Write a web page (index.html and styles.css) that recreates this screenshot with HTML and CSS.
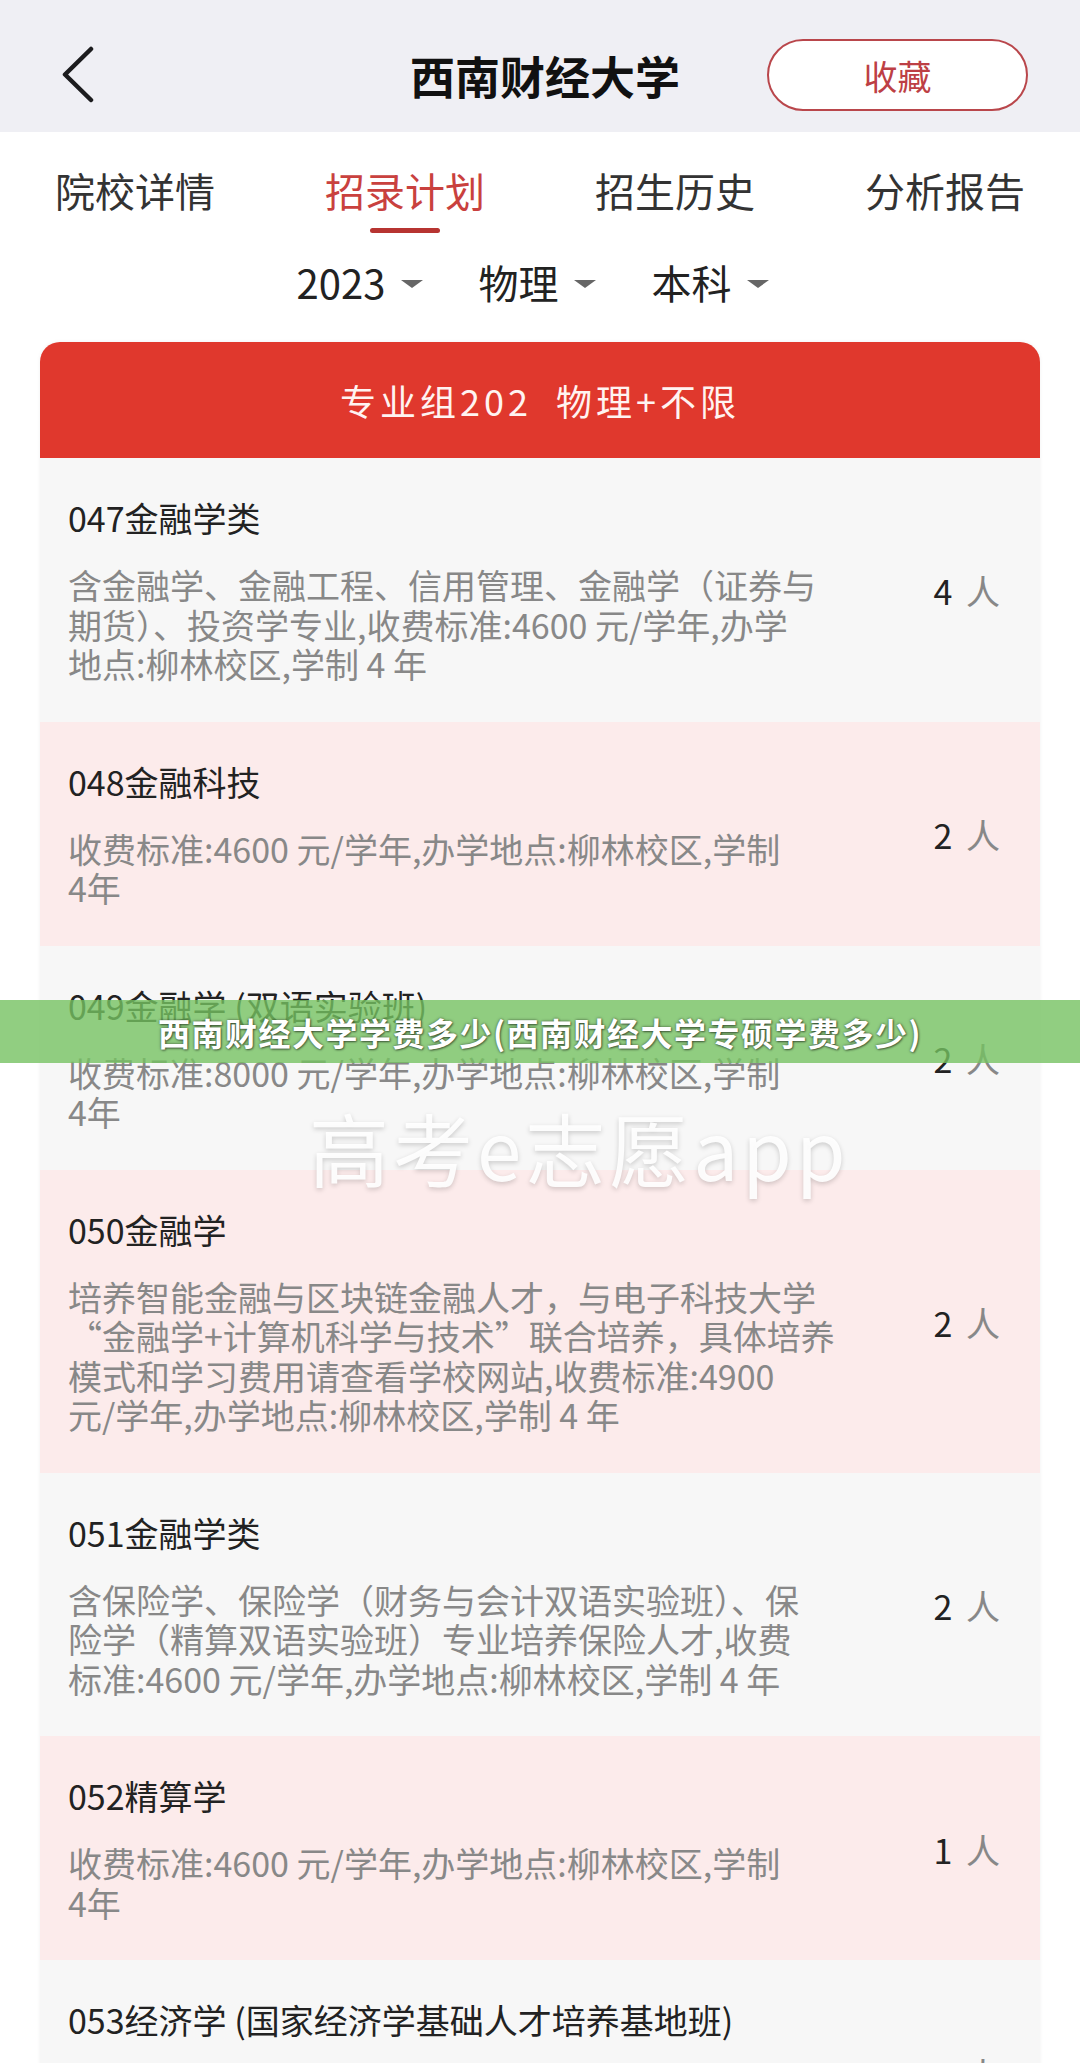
FILE: index.html
```html
<!DOCTYPE html>
<html lang="zh-CN">
  <head>
    <meta charset="UTF-8" />
    <meta name="viewport" content="width=device-width, initial-scale=1.0" />
    <title>西南财经大学 - 招录计划</title>
    <link rel="stylesheet" href="styles.css">
  </head>
  <body>
    <header class="topbar">
      <a class="back" href="#">
        <svg width="34" height="58" viewBox="0 0 34 58">
          <polyline points="29,3 3,28.5 29,54" fill="none" stroke="#1c1c1e" stroke-width="4.5" stroke-linecap="round" stroke-linejoin="round" />
        </svg>
      </a>
      <h1 class="title">西南财经大学</h1>
      <button class="fav">收藏</button>
    </header>

    <nav class="tabs">
      <div class="tab">院校详情</div>
      <div class="tab active">招录计划<span class="bar"></span></div>
      <div class="tab">招生历史</div>
      <div class="tab">分析报告</div>
    </nav>

    <div class="filters">
      <div class="filter">2023<i class="caret"></i></div>
      <div class="filter">物理<i class="caret"></i></div>
      <div class="filter">本科<i class="caret"></i></div>
    </div>

    <section class="card">
      <div class="card-head">专业组202&nbsp;&nbsp;物理+不限</div>

      <div class="major">
        <div class="info">
          <div class="name">047金融学类</div>
          <div class="desc">含金融学、金融工程、信用管理、金融学（证券与<br>期货）、投资学专业,收费标准:4600 元/学年,办学<br>地点:柳林校区,学制 4 年</div>
        </div>
        <div class="count"><b>4</b> 人</div>
      </div>

      <div class="major pink">
        <div class="info">
          <div class="name">048金融科技</div>
          <div class="desc">收费标准:4600 元/学年,办学地点:柳林校区,学制<br>4年</div>
        </div>
        <div class="count"><b>2</b> 人</div>
      </div>

      <div class="major">
        <div class="info">
          <div class="name">049金融学 (双语实验班)</div>
          <div class="desc">收费标准:8000 元/学年,办学地点:柳林校区,学制<br>4年</div>
        </div>
        <div class="count"><b>2</b> 人</div>
      </div>

      <div class="major pink">
        <div class="info">
          <div class="name">050金融学</div>
          <div class="desc">培养智能金融与区块链金融人才，与电子科技大学<br>“金融学+计算机科学与技术”联合培养，具体培养<br>模式和学习费用请查看学校网站,收费标准:4900<br>元/学年,办学地点:柳林校区,学制 4 年</div>
        </div>
        <div class="count"><b>2</b> 人</div>
      </div>

      <div class="major">
        <div class="info">
          <div class="name">051金融学类</div>
          <div class="desc">含保险学、保险学（财务与会计双语实验班）、保<br>险学（精算双语实验班）专业培养保险人才,收费<br>标准:4600 元/学年,办学地点:柳林校区,学制 4 年</div>
        </div>
        <div class="count"><b>2</b> 人</div>
      </div>

      <div class="major pink">
        <div class="info">
          <div class="name">052精算学</div>
          <div class="desc">收费标准:4600 元/学年,办学地点:柳林校区,学制<br>4年</div>
        </div>
        <div class="count"><b>1</b> 人</div>
      </div>

      <div class="major">
        <div class="info">
          <div class="name">053经济学 (国家经济学基础人才培养基地班)</div>
          <div class="desc">收费标准:4600 元/学年,办学地点:柳林校区,学制<br>4年</div>
        </div>
        <div class="count"><b>2</b> 人</div>
      </div>
    </section>

    <!-- overlays stamped on top of the screenshot -->
    <div class="banner">西南财经大学学费多少(西南财经大学专硕学费多少)</div>
    <div class="watermark">高考e志愿app</div>
  </body>
</html>
```

FILE: styles.css
```css
body {
  margin: 0;
  background-color: #fff;
  font-family: "Noto Sans CJK SC", "Liberation Sans", sans-serif;
  color: #222;
  position: relative;
  overflow: hidden;
}
.topbar {
  display: grid;
  grid-template-columns: 1fr auto 1fr;
  align-items: center;
  height: 132px;
  box-sizing: border-box;
  padding: 18px 52px 0 62px;
  background-color: #efeff4;
}
.back {
  display: flex;
  align-items: center;
}
.title {
  margin: 0;
  font-size: 45px;
  font-weight: bold;
  color: #111;
  line-height: 1;
}
.fav {
  justify-self: end;
  width: 261px;
  height: 72px;
  border: 2.5px solid #b9464b;
  border-radius: 36px;
  background: #fff;
  color: #bd3f45;
  font-family: inherit;
  font-size: 34px;
  padding: 0;
}
.tabs {
  display: grid;
  grid-template-columns: repeat(4, 1fr);
  margin-top: 33px;
}
.tab {
  display: flex;
  flex-direction: column;
  align-items: center;
  font-size: 40px;
  line-height: 50px;
  color: #333;
}
.tab.active {
  color: #c9413e;
}
.tab .bar {
  display: block;
  width: 70px;
  height: 5px;
  margin-top: 13px;
  border-radius: 3px;
  background-color: #b73431;
}
.filters {
  display: flex;
  justify-content: center;
  gap: 55px;
  margin-top: 24px;
  padding-right: 14px;
}
.filter {
  display: flex;
  align-items: center;
  font-size: 40px;
  line-height: 50px;
  color: #222;
}
.caret {
  margin-left: 16px;
  margin-top: 4px;
  border-left: 11px solid transparent;
  border-right: 11px solid transparent;
  border-top: 8px solid #666;
}
.card {
  margin: 35px 40px 0;
  border-radius: 20px 20px 0 0;
  overflow: hidden;
  box-shadow: 0 0 4px rgba(0, 0, 0, 0.06);
}
.card-head {
  height: 116px;
  display: flex;
  align-items: center;
  justify-content: center;
  background-color: #e0382d;
  color: #fff3f1;
  font-size: 36px;
  letter-spacing: 4px;
}
.major {
  display: flex;
  align-items: center;
  padding: 40px 40px 38px 28px;
  background-color: #f7f7f7;
}
.major.pink {
  background-color: #fcebeb;
}
.info {
  width: 800px;
}
.name {
  font-size: 34px;
  line-height: 40px;
  color: #222;
}
.desc {
  margin-top: 27px;
  font-size: 34px;
  line-height: 39.5px;
  color: #888;
}
.count {
  margin-left: auto;
  font-size: 34px;
  color: #888;
  word-spacing: 6px;
}
.count b {
  font-weight: normal;
  color: #222;
}
.banner {
  position: absolute;
  left: 0;
  right: 0;
  top: 1000px;
  height: 63px;
  display: flex;
  align-items: center;
  justify-content: center;
  background-color: rgba(117, 194, 98, 0.8);
  color: #fff;
  font-size: 32px;
  font-weight: bold;
  letter-spacing: 1.5px;
  text-shadow: 0 0 3px rgba(0, 0, 0, 0.55), 1px 1px 2px rgba(0, 0, 0, 0.4);
}
.watermark {
  position: absolute;
  left: 309px;
  top: 1106px;
  font-size: 80px;
  line-height: 1;
  letter-spacing: 4px;
  color: rgba(255, 255, 255, 0.92);
  text-shadow: 0 2px 5px rgba(0, 0, 0, 0.18);
  white-space: nowrap;
}
```
